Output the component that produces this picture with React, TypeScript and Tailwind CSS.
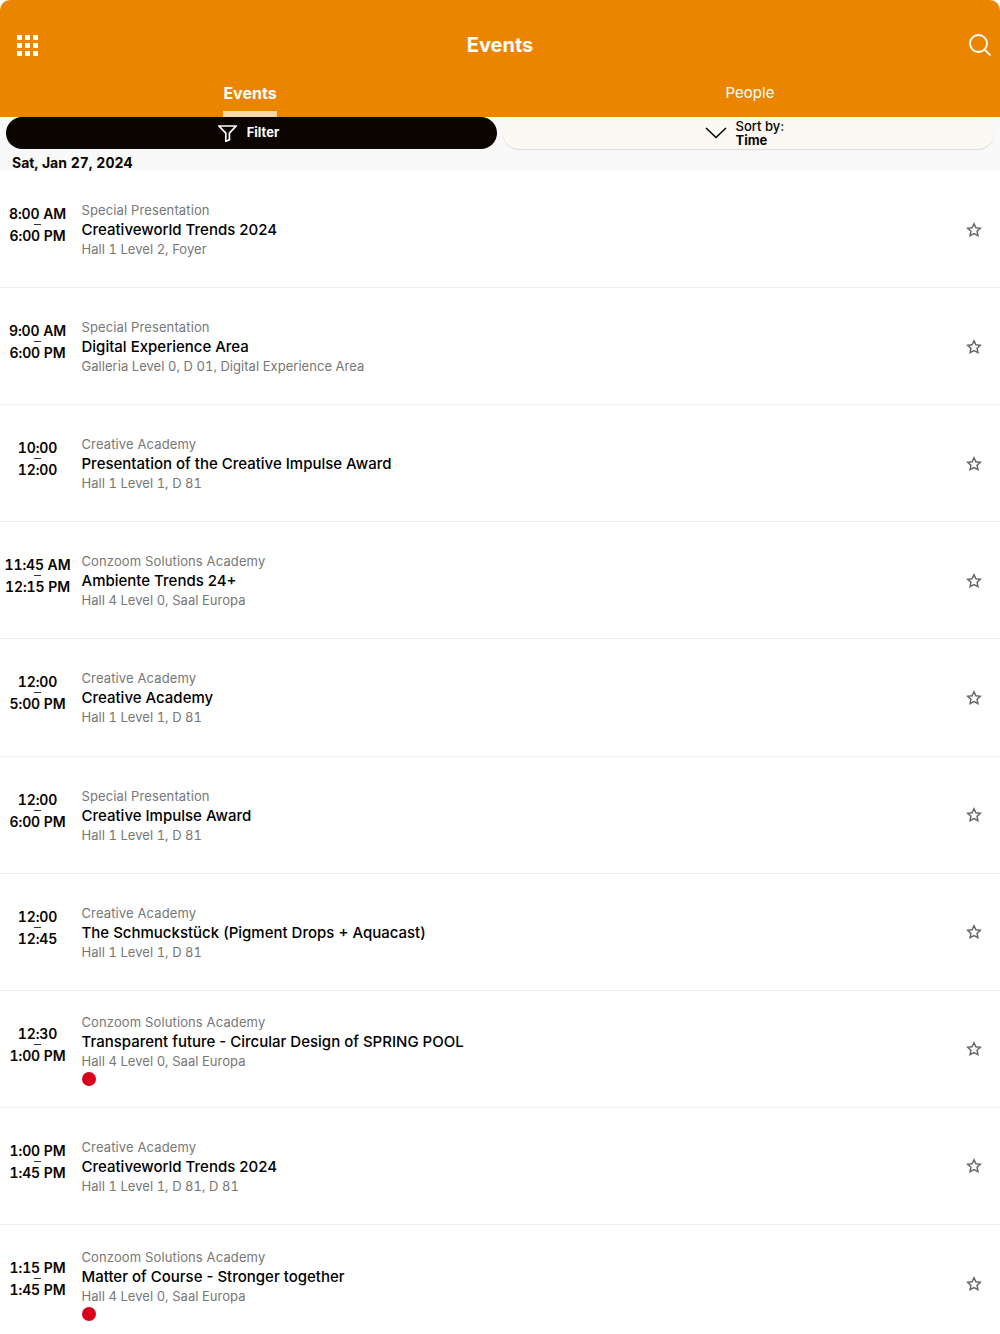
const events = [
  { start: '8:00 AM', end: '6:00 PM', category: 'Special Presentation', title: 'Creativeworld Trends 2024', place: 'Hall 1 Level 2, Foyer' },
  { start: '9:00 AM', end: '6:00 PM', category: 'Special Presentation', title: 'Digital Experience Area', place: 'Galleria Level 0, D 01, Digital Experience Area' },
  { start: '10:00', end: '12:00', category: 'Creative Academy', title: 'Presentation of the Creative Impulse Award', place: 'Hall 1 Level 1, D 81' },
  { start: '11:45 AM', end: '12:15 PM', category: 'Conzoom Solutions Academy', title: 'Ambiente Trends 24+', place: 'Hall 4 Level 0, Saal Europa' },
  { start: '12:00', end: '5:00 PM', category: 'Creative Academy', title: 'Creative Academy', place: 'Hall 1 Level 1, D 81' },
  { start: '12:00', end: '6:00 PM', category: 'Special Presentation', title: 'Creative Impulse Award', place: 'Hall 1 Level 1, D 81' },
  { start: '12:00', end: '12:45', category: 'Creative Academy', title: 'The Schmuckstück (Pigment Drops + Aquacast)', place: 'Hall 1 Level 1, D 81' },
  { start: '12:30', end: '1:00 PM', category: 'Conzoom Solutions Academy', title: 'Transparent future - Circular Design of SPRING POOL', place: 'Hall 4 Level 0, Saal Europa', dot: true },
  { start: '1:00 PM', end: '1:45 PM', category: 'Creative Academy', title: 'Creativeworld Trends 2024', place: 'Hall 1 Level 1, D 81, D 81' },
  { start: '1:15 PM', end: '1:45 PM', category: 'Conzoom Solutions Academy', title: 'Matter of Course - Stronger together', place: 'Hall 4 Level 0, Saal Europa', dot: true },
];

function GridIcon() {
  return (
    <svg width="21" height="21" viewBox="0 0 21 21" fill="#fff">
      {[0, 8, 16].map((y) =>
        [0, 8, 16].map((x) => <rect key={`${x}-${y}`} x={x} y={y} width="5" height="5" />)
      )}
    </svg>
  );
}

function FilterIcon() {
  return (
    <svg width="19" height="17" viewBox="0 0 19 17" fill="none" stroke="#fff" strokeWidth="1.7">
      <path d="M1 1h17l-6.6 7.2v6.6l-3.6 1.4V8.2z" />
    </svg>
  );
}

function SortChevron() {
  return (
    <svg width="22" height="12" viewBox="0 0 22 12" fill="none" stroke="#0a0500" strokeWidth="1.6">
      <path d="M1 1l10 9.5L21 1" />
    </svg>
  );
}

function SearchIcon() {
  return (
    <svg width="22" height="22" viewBox="0 0 22 22" fill="none" stroke="#fff" strokeWidth="1.8">
      <circle cx="9.5" cy="9.5" r="8.5" />
      <path d="M16 16l5.5 5.5" />
    </svg>
  );
}

function StarIcon() {
  return (
    <svg width="16" height="16" viewBox="0 0 16 16" fill="none" stroke="#666666" strokeWidth="1.5">
      <path d="M8 1.8l1.9 4 4.4.5-3.2 3 .8 4.4L8 11.6l-3.9 2.1.8-4.4-3.2-3 4.4-.5z" />
    </svg>
  );
}

export default function App() {
  return (
    <div className="h-[1334px] overflow-hidden bg-white font-['Inter',sans-serif]">
      <header className="h-[117px] rounded-t-[10px] bg-[#eb8500] text-white">
        <div className="grid h-[90px] grid-cols-[1fr_auto_1fr] items-center px-[9px]">
          <div className="ml-[8px] mt-[1px]">
            <GridIcon />
          </div>
          <h1 className="text-[20px] font-bold">Events</h1>
          <div className="flex justify-end">
            <SearchIcon />
          </div>
        </div>
        <div className="grid h-[27px] grid-cols-2 text-[15px]">
          <div className="flex justify-center">
            <div className="flex h-[27px] w-[54px] flex-col items-center justify-between">
              <span className="text-[16px] font-bold leading-[6px]">Events</span>
              <span className="h-[6px] w-[54px] bg-[#f9d9ab]" />
            </div>
          </div>
          <span className="text-center leading-[6px]">People</span>
        </div>
      </header>

      <div className="h-[54px] bg-[#f9f9f9]">
        <div className="grid h-[32px] grid-cols-2 gap-[6px] px-[6px]">
          <button className="flex items-center justify-center gap-[10px] rounded-full bg-[#0a0500] pr-[6px] text-[13px] font-bold text-white">
            <FilterIcon />
            Filter
          </button>
          <button className="flex items-center justify-center gap-[9px] rounded-full bg-[#fcf8f3] text-[13px] text-[#0a0500] shadow-[0_1px_1px_rgba(0,0,0,0.12)]">
            <SortChevron />
            <span className="w-[57px] text-left font-medium leading-[14px]">
              Sort by:
              <br />
              <b>Time</b>
            </span>
          </button>
        </div>
        <div className="pl-3 pt-[5px] text-[14px] font-bold tabular-nums leading-[18px] text-[#0a0500]">Sat, Jan 27, 2024</div>
      </div>

      {events.map((event, index) => (
        <div key={index} className="flex h-[117.12px] items-center border-b border-[#eeeeee] pr-[18px]">
          <div className="mb-[8px] w-[75px] text-center text-[14px] font-semibold tabular-nums leading-[22px] tracking-[-0.1px] text-[#0a0500]">
            <div>{event.start}</div>
            <div className="relative">
              <span className="absolute left-[34px] top-[-1px] h-px w-[7px] bg-[#333333]" />
              {event.end}
            </div>
          </div>
          <div className="ml-[6.5px] mt-[1px] flex-1">
            <div className="text-[13px] leading-[20px] tracking-[0.12px] text-[#777777]">{event.category}</div>
            <div className="text-[15px] font-medium leading-[19px] text-black">{event.title}</div>
            <div className="text-[13px] tabular-nums leading-[20px] tracking-[0.04px] text-[#777777]">{event.place}</div>
            {event.dot && <div className="mt-[1px] h-[14px] w-[14px] rounded-full bg-[#d9001b]" />}
          </div>
          <div className="mt-[1px]">
            <StarIcon />
          </div>
        </div>
      ))}
    </div>
  );
}
